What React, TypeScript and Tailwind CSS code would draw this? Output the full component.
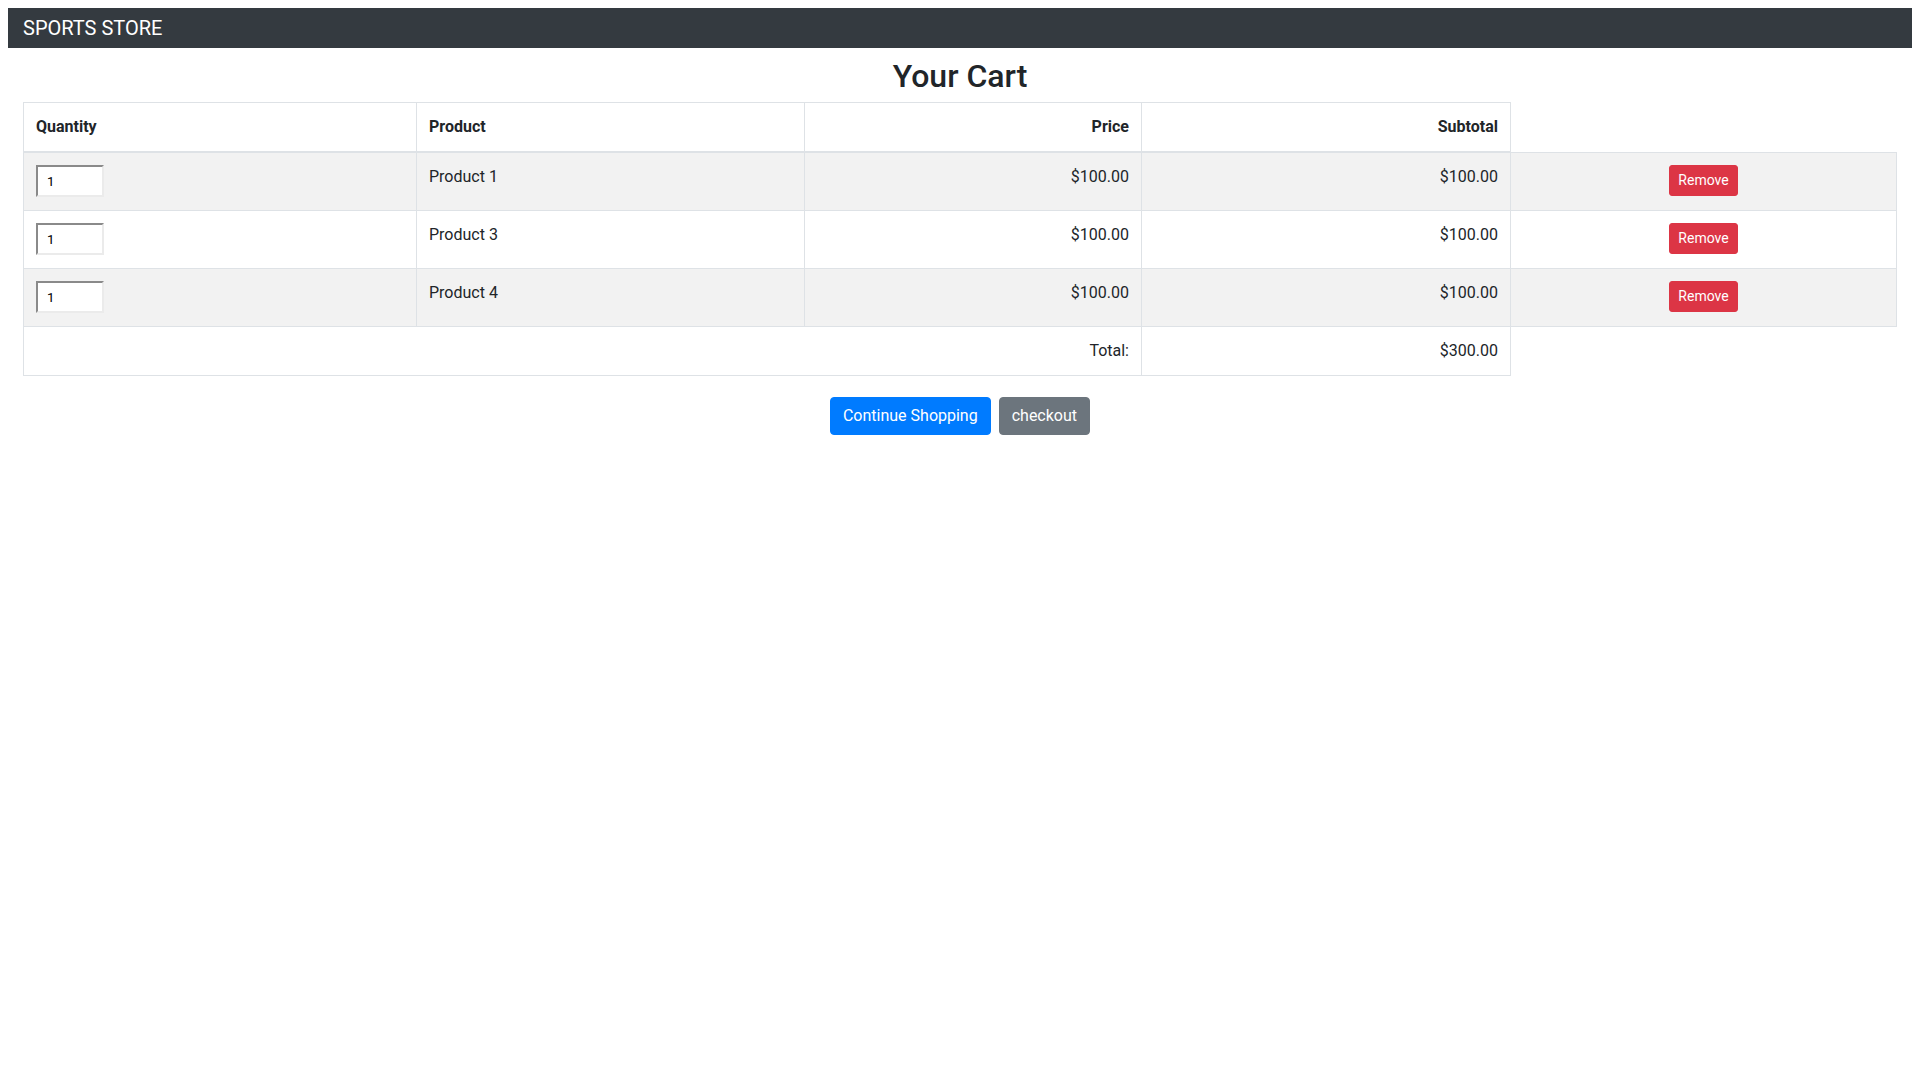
import React from 'react';

type CartLine = { id: number; name: string; price: number; qty: number };

const lines: CartLine[] = [
  { id: 1, name: 'Product 1', price: 100, qty: 1 },
  { id: 3, name: 'Product 3', price: 100, qty: 1 },
  { id: 4, name: 'Product 4', price: 100, qty: 1 },
];

const money = (n: number) => `$${n.toFixed(2)}`;

const App: React.FC = () => {
  const total = lines.reduce((sum, l) => sum + l.price * l.qty, 0);

  return (
    <div className="min-h-screen bg-white p-2 text-base text-[#212529] font-['Segoe_UI',Roboto,'Noto_Sans',sans-serif]">
      {/* Navbar */}
      <nav className="bg-[#343a40] px-[15px] py-[5px]">
        <span className="text-xl leading-[30px] text-white">SPORTS STORE</span>
      </nav>

      <div className="px-[15px]">
        <h2 className="mt-[9px] mb-[7px] text-center text-[32px] leading-[1.2] font-medium">Your Cart</h2>

        <table className="w-full table-fixed border-collapse">
          <colgroup>
            <col className="w-[393px]" />
            <col className="w-[388px]" />
            <col className="w-[337px]" />
            <col className="w-[369px]" />
            <col />
          </colgroup>
          <thead>
            <tr>
              <th className="border border-b-2 border-[#dee2e6] p-3 text-left font-bold leading-6">Quantity</th>
              <th className="border border-b-2 border-[#dee2e6] p-3 text-left font-bold leading-6">Product</th>
              <th className="border border-b-2 border-[#dee2e6] p-3 text-right font-bold leading-6">Price</th>
              <th className="border border-b-2 border-[#dee2e6] p-3 text-right font-bold leading-6">Subtotal</th>
            </tr>
          </thead>
          <tbody>
            {lines.map((line, i) => (
              <tr key={line.id} className={i % 2 === 0 ? 'bg-[#f2f2f2]' : 'bg-white'}>
                <td className="border border-[#dee2e6] px-3 pt-3 pb-[13px] align-top leading-6">
                  <input
                    type="number"
                    defaultValue={line.qty}
                    className="block h-[32px] w-[68px] border-2 border-solid border-t-[#8a8a8a] border-l-[#8a8a8a] border-r-[#ebebeb] border-b-[#ebebeb] bg-white pl-[9px] text-[13.33px] text-black outline-none [appearance:textfield] [&::-webkit-inner-spin-button]:appearance-none"
                  />
                </td>
                <td className="border border-[#dee2e6] p-3 align-top leading-6">{line.name}</td>
                <td className="border border-[#dee2e6] p-3 text-right align-top leading-6">{money(line.price)}</td>
                <td className="border border-[#dee2e6] p-3 text-right align-top leading-6">{money(line.price * line.qty)}</td>
                <td className="border border-[#dee2e6] p-3 text-center align-top leading-6">
                  <button className="rounded-[3px] border border-[#dc3545] bg-[#dc3545] px-2 py-1 text-sm leading-[21px] text-white">
                    Remove
                  </button>
                </td>
              </tr>
            ))}
            <tr>
              <td colSpan={3} className="border border-[#dee2e6] p-3 text-right align-top leading-6">Total:</td>
              <td className="border border-[#dee2e6] p-3 text-right align-top leading-6">{money(total)}</td>
            </tr>
          </tbody>
        </table>

        <div className="mt-[21px] flex justify-center gap-2">
          <button className="rounded border border-[#007bff] bg-[#007bff] px-3 py-1.5 leading-6 text-white">
            Continue Shopping
          </button>
          <button className="rounded border border-[#6c757d] bg-[#6c757d] px-3 py-1.5 leading-6 text-white">
            checkout
          </button>
        </div>
      </div>
    </div>
  );
};

export default App;
